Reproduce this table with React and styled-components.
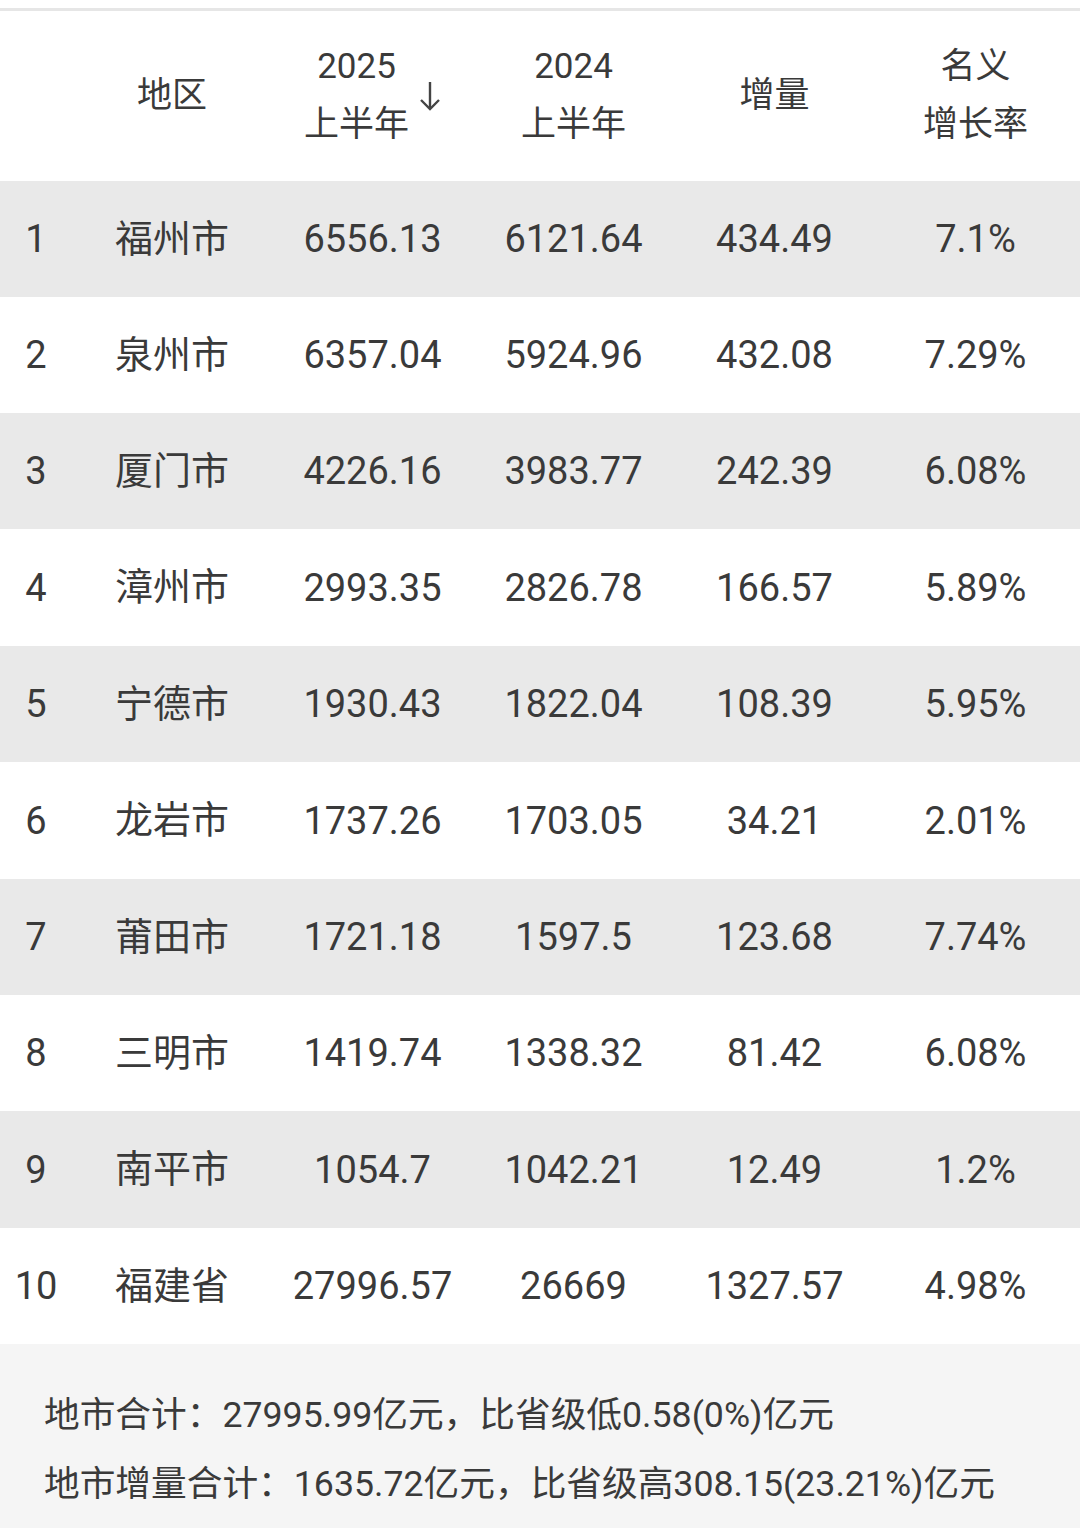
import React from "react";
import styled, { createGlobalStyle } from "styled-components";

const GlobalStyle = createGlobalStyle`
    html, body {
        margin: 0;
        padding: 0;
        background: #fff;
    }
    body {
        font-family: Roboto, "Noto Sans CJK SC", sans-serif;
        color: #3a3a3a;
    }
`;

const Page = styled.div`
    width: 1080px;
    padding-top: 8px;
    background: #fff;
`;

const TopRule = styled.div`
    height: 3px;
    background: #e6e6e6;
`;

const Grid = styled.div`
    display: grid;
    grid-template-columns: 72px 200px repeat(4, 201px) 1fr;
`;

const HeadCell = styled.div`
    height: 170px;
    display: flex;
    align-items: center;
    justify-content: center;
    font-size: 35px;
    line-height: 58px;
    text-align: center;
    white-space: nowrap;
`;

const Row = styled.div`
    display: contents;
    & > div {
        background: ${props => (props.$shaded ? "#e9e9e9" : "#fff")};
    }
`;

const Cell = styled.div`
    box-sizing: border-box;
    height: ${props => props.$h || 116}px;
    display: flex;
    align-items: center;
    justify-content: center;
    font-size: 38px;
    white-space: nowrap;
    padding-bottom: ${props => (props.$cjk ? 8 : 0)}px;
`;

const SortWrap = styled.div`
    display: flex;
    align-items: center;
    gap: 10px;
`;

const Footer = styled.div`
    background: #f5f5f5;
    height: 148px;
    padding: 37px 0 0 44px;
    font-size: 35.7px;
    line-height: 69px;
    white-space: nowrap;
`;

const SortArrow = () => (
    <svg width="22" height="30" viewBox="0 0 22 30" fill="none">
        <path d="M11 1V28" stroke="#444" strokeWidth="2.4" />
        <path d="M2 19L11 28L20 19" stroke="#444" strokeWidth="2.4" />
    </svg>
);

const rows = [
    ["1", "福州市", "6556.13", "6121.64", "434.49", "7.1%"],
    ["2", "泉州市", "6357.04", "5924.96", "432.08", "7.29%"],
    ["3", "厦门市", "4226.16", "3983.77", "242.39", "6.08%"],
    ["4", "漳州市", "2993.35", "2826.78", "166.57", "5.89%"],
    ["5", "宁德市", "1930.43", "1822.04", "108.39", "5.95%"],
    ["6", "龙岩市", "1737.26", "1703.05", "34.21", "2.01%"],
    ["7", "莆田市", "1721.18", "1597.5", "123.68", "7.74%"],
    ["8", "三明市", "1419.74", "1338.32", "81.42", "6.08%"],
    ["9", "南平市", "1054.7", "1042.21", "12.49", "1.2%"],
    ["10", "福建省", "27996.57", "26669", "1327.57", "4.98%"]
];

export default function App() {
    return (
        <>
            <GlobalStyle />
            <Page>
                <TopRule />
                <Grid>
                    <HeadCell />
                    <HeadCell>地区</HeadCell>
                    <HeadCell>
                        <SortWrap>
                            <div>
                                2025
                                <br />
                                上半年
                            </div>
                            <SortArrow />
                        </SortWrap>
                    </HeadCell>
                    <HeadCell>
                        2024
                        <br />
                        上半年
                    </HeadCell>
                    <HeadCell>增量</HeadCell>
                    <HeadCell>
                        名义
                        <br />
                        增长率
                    </HeadCell>
                    <HeadCell />
                    {rows.map((r, i) => {
                        const h = i === 3 || i === 5 || i === 8 ? 117 : 116;
                        return (
                            <Row key={r[0]} $shaded={i % 2 === 0}>
                                {r.map((v, j) => (
                                    <Cell key={j} $h={h} $cjk={j === 1}>
                                        {v}
                                    </Cell>
                                ))}
                                <Cell $h={h} />
                            </Row>
                        );
                    })}
                </Grid>
                <Footer>
                    地市合计：27995.99亿元，比省级低0.58(0%)亿元
                    <br />
                    地市增量合计：1635.72亿元，比省级高308.15(23.21%)亿元
                </Footer>
            </Page>
        </>
    );
}
